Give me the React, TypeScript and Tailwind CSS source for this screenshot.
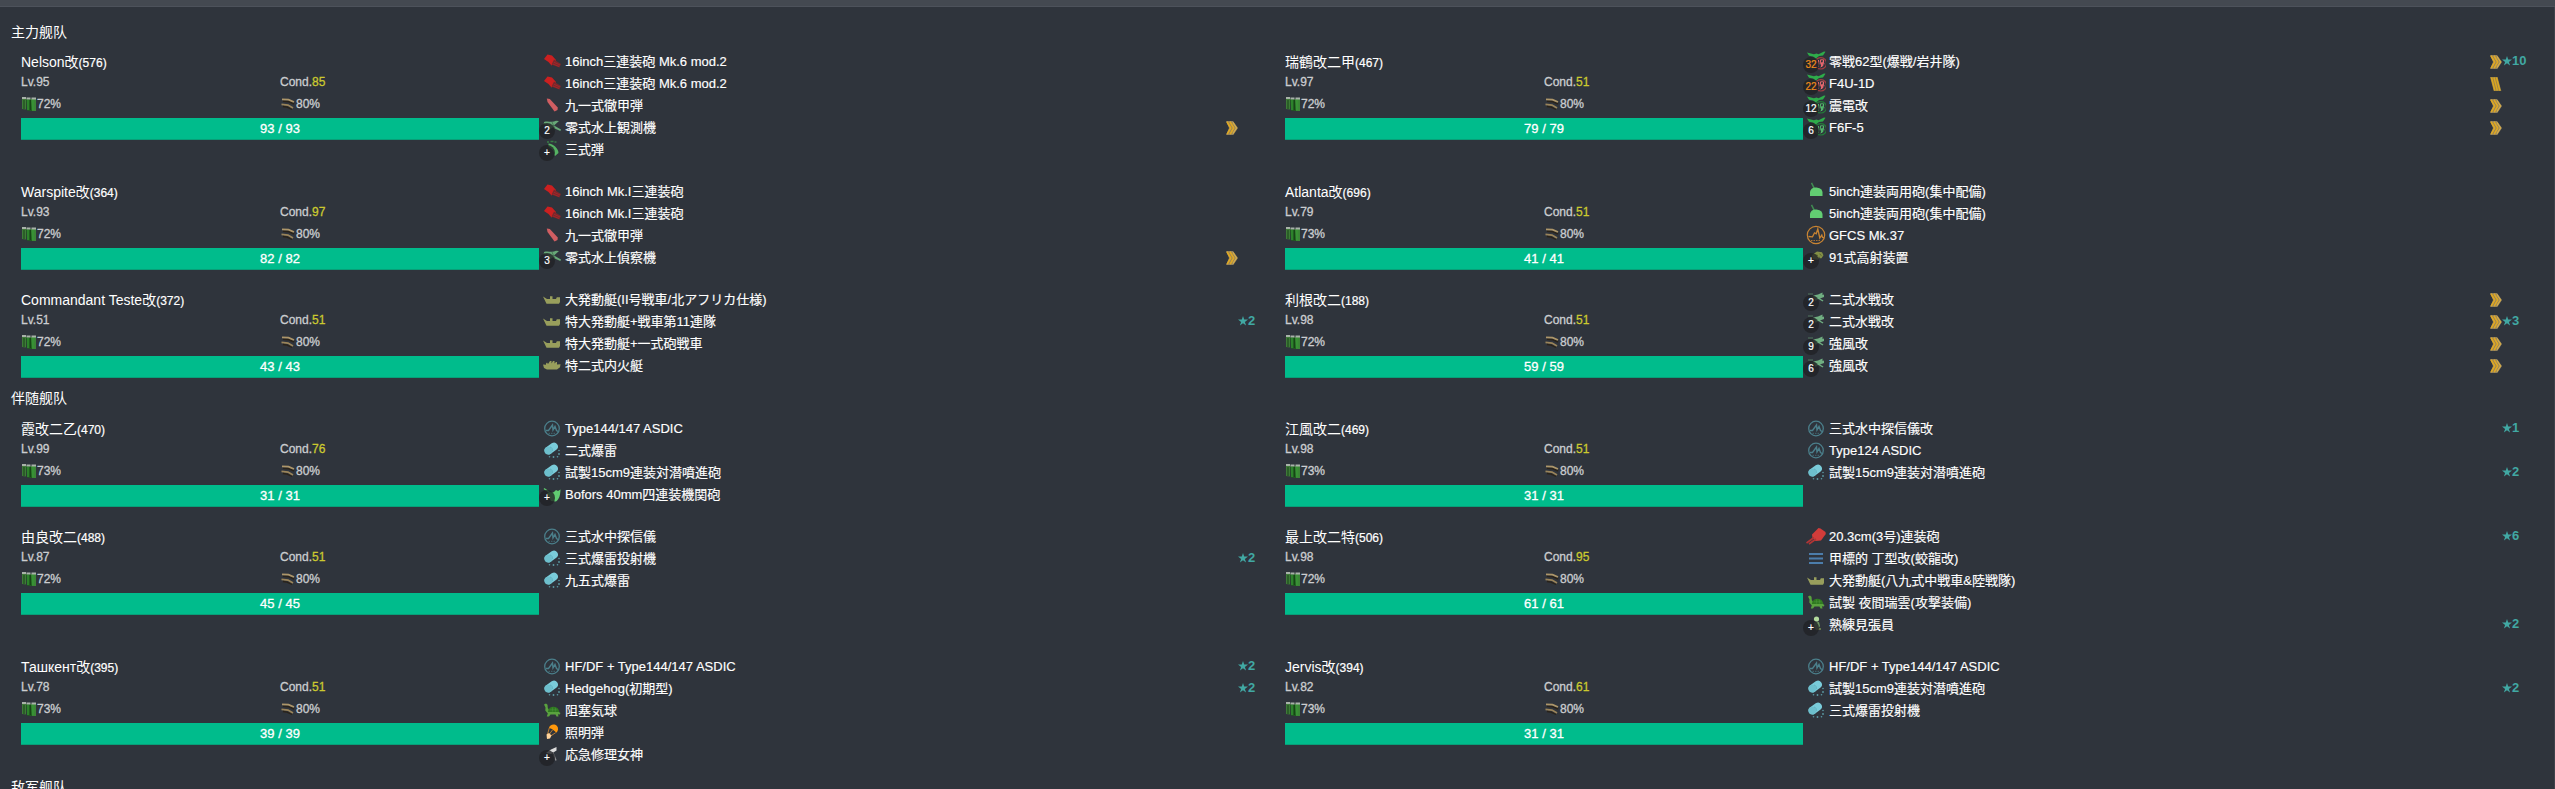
import React from "react";

type IconName =
  | "gun" | "redgun" | "ap" | "seaplane" | "aa" | "craft" | "tank" | "sonar" | "depth"
  | "aagun" | "turtle" | "flare" | "goddess" | "bomber" | "fighter" | "ha" | "radar"
  | "director" | "wfighter" | "midget" | "lookout";

type Item = {
  n: string;
  i: IconName;
  b?: string;
  over?: boolean;
  alv?: "chev" | "bars";
  star?: number;
};

type Ship = { name: string; id: number; lv: number; cond: number; fuel: number; hp: number; items: Item[] };

function Icon({ name }: { name: IconName }) {
  switch (name) {
    case "gun":
      return (
        <g>
          <path d="M2 8l3.500-4.500 4.500 1 4 4.500-1 3.500-3.500 2-3-3.500z" fill="#cb2020" />
          <path d="M12 8.500l7 4.500-1.500 3.500-8-3z" fill="#7a282c" />
          <path d="M11 13l6 2.500M12 11.300l6 2.700" stroke="#b32426" strokeWidth=".7" />
        </g>
      );
    case "redgun":
      return (
        <g>
          <path d="M6 8.500L12.500 2l2 .5 5 3.500.3 2-4.800 6.500-5.500.5-3-3z" fill="#d23c3a" />
          <path d="M.5 17l7.500-5.500M3 18l7-5" stroke="#b03535" strokeWidth="1.600" />
        </g>
      );
    case "ap":
      return <path d="M4.800 3.500l3 .5 8 8.500-.3 2.500-3 1.500-7-9.500z" fill="#d05e62" />;
    case "seaplane":
      return (
        <g>
          <path d="M2 5c4-1.500 8 1 12-1.200l3 .2-5 4.500 7 4-.6 1.500-8-3.500-4 3-1-1.500 2.500-2.500L2 6.500z" fill="#68a878" />
          <path d="M1 7l7 1M10 5l3 7" stroke="#497a56" />
        </g>
      );
    case "aa":
      return (
        <g>
          <path d="M6.500 4.500c5 .5 10 5 10 9.500L13 17l-1-1c.5-4-2-6.500-5.500-8z" fill="#55b263" />
          <path d="M5 3h2M8.500 2.500h3M12.500 3h2" stroke="#397c46" strokeWidth="1.500" />
        </g>
      );
    case "craft":
      return (
        <path d="M1 7.500l4 2.500h3V7.300h2.500V10h3.500l.8-1.800H18V13l-1 1.800H4.500z" fill="#989e5c" />
      );
    case "tank":
      return (
        <path d="M1 9.500l3 .2V8.500l1-1 1 1.500L8 6h1.500v2.500l1.500-2.500h1.500v2.500l1.500-1.500h1v2.500l3.500-.2-.5 2.900-3 2.300H5l-3-1.500z" fill="#989e5c" />
      );
    case "sonar":
      return (
        <g fill="none" stroke="#4b7f8b" strokeWidth="1.300">
          <circle cx="10" cy="10.500" r="7.300" />
          <path d="M4 12.500h2.500L10.500 7l.5 5 2-3.500 1.500 4 1.500 1" strokeWidth="1.400" />
          <path d="M6.500 15.300h7" strokeDasharray="1.500 1" strokeWidth=".7" />
        </g>
      );
    case "depth":
      return (
        <g>
          <path d="M6.500 10.500L12 6.500" stroke="#7accda" strokeWidth="7.800" strokeLinecap="round" />
          <circle cx="6.300" cy="10.600" r="3.900" fill="#6dbfcd" />
          <path d="M8 6.900c1.800.4 2.800 2 2.500 4" stroke="#5faebc" fill="none" strokeWidth=".8" />
          <g fill="#5b9aa5">
            <circle cx="17" cy="10.500" r=".8" /><circle cx="17" cy="14" r=".9" />
            <circle cx="7.500" cy="16.800" r=".8" /><circle cx="11.500" cy="17" r=".9" /><circle cx="15.500" cy="16.800" r=".8" />
          </g>
        </g>
      );
    case "aagun":
      return (
        <g>
          <path d="M2 4.500l7 5" stroke="#5dc46b" strokeWidth="1.500" />
          <path d="M5 9l7-1 2-2 2 1 2.500-1.500c-.3 5.500-1 9.500-4.500 12L9 17z" fill="#61cb71" />
        </g>
      );
    case "turtle":
      return (
        <g>
          <path d="M2 4.500l2-1 1.500 1.200.3 3.300L8 11.500l8.500.3 2 1.200-.8 1.500-1.700-.3.500 2.300h-2l-1-2H8.500l-1.500 2H4.800l1-3-2.500-3L3.500 7.500z" fill="#5aa23f" />
          <path d="M5.800 12c.5-3.800 3-5.500 6-5.300 3.200.2 5.300 2.300 5.500 5.300z" fill="#2f7a20" />
          <path d="M8 9.800h7.500M10.500 7.500v4.200M13.500 7.700v4" stroke="#4c953c" strokeWidth=".5" />
        </g>
      );
    case "flare":
      return (
        <g>
          <path d="M7 6C7.500 3 12 1 15 4c1.700 2 1.300 4.800-.7 6.800C12.500 8.500 10.500 7 7 6z" fill="#ff980c" />
          <path d="M7.300 6l-2 7M13.700 10.700L7 15M10.500 8L6 14" stroke="#c98434" strokeWidth=".9" />
          <path d="M4.500 12.500l2.500-1.500 2.500 2.500-1.500 3-3 .5z" fill="#ffd29a" />
        </g>
      );
    case "goddess":
      return (
        <g>
          <path d="M4 9l5-3.500 5.500-2.500v3.500L9 10z" fill="#ddd" />
          <path d="M10.500 8l3.500 8.500" stroke="#8d8d90" strokeWidth="1.500" />
        </g>
      );
    case "bomber":
    case "fighter": {
      const red = name === "bomber";
      return (
        <g>
          <path d="M1 1.500l7 1.700L10.500 2.500l2 .7L18 .5l1.500.3-2.500 3.700-4 .5-3 2.500-3-2-4-.7z" fill="#2eac4a" />
          <path d="M1 8l17-1" stroke="#285f39" strokeWidth="1" />
          <circle cx="14.800" cy="12.300" r="5.700" fill="#2f343c" stroke={red ? "#a43d43" : "#237e39"} strokeWidth="1.200" />
          <path
            d="M12.500 9v7M14.500 8.800h3v3h-3zM13.500 12.800h5M15.500 12v4M17.500 14l-3 2M11.500 11h2M17.500 9.500l-1.500 6"
            fill="none" stroke={red ? "#f36b72" : "#55bd6d"} strokeWidth=".9"
          />
        </g>
      );
    }
    case "ha":
      return (
        <g>
          <path d="M5.500 1.800l3 6" stroke="#3f8a51" strokeWidth="1.500" />
          <path d="M4 15V11c.3-3 3-5 6.500-4.500l3 .7 2 1.300 1 2.500v4z" fill="#62cd72" />
        </g>
      );
    case "radar":
      return (
        <g fill="none" stroke="#c98432" strokeWidth="1.200">
          <circle cx="10" cy="10" r="8.700" />
          <path d="M2.500 11.500l4 .3 2-4 1.700 1L11.800 4l2 9 2-3 .7 2.500 1.500.2" strokeWidth="1.300" />
          <path d="M5 15.500h10" strokeDasharray="1.500 1" strokeWidth=".8" />
        </g>
      );
    case "director":
      return (
        <g>
          <path d="M6 8l5-3.500 5 .8 1.500 3-2 3h-1.800l-.7-2-1 3.500L7 12z" fill="#838f46" />
          <path d="M9 7.500l3 1M13.500 7l2 1.500" stroke="#59652d" />
        </g>
      );
    case "wfighter":
      return (
        <g>
          <path d="M7 6.500l5-1 4.500-2V6l1.500-.5v2.500l-4 1.500 3.500 2-1 1-4-2.500-3 2-1-2.500z" fill="#70ae81" />
          <path d="M2 5h5M5 8l5 1" stroke="#52775e" strokeWidth="1" />
        </g>
      );
    case "midget":
      return <path d="M3 6h14M3 10.500h14M3 15h14" stroke="#4c7dab" strokeWidth="1.800" />;
    case "lookout":
      return (
        <g>
          <circle cx="10.500" cy="5" r="2.600" fill="#b3dc9e" />
          <path d="M8 8.500l5-.5 1 4-3 4.500-2.500-2z" fill="#6f9863" />
          <path d="M11 15h4" stroke="#768c52" strokeWidth="1.500" />
        </g>
      );
  }
}

const S = (n: string, i: IconName, x: Partial<Item> = {}): Item => ({ n, i, ...x });

const mainFleet: [Ship, Ship][] = [
  [
    { name: "Nelson改", id: 576, lv: 95, cond: 85, fuel: 72, hp: 93, items: [
      S("16inch三連装砲 Mk.6 mod.2", "gun"),
      S("16inch三連装砲 Mk.6 mod.2", "gun"),
      S("九一式徹甲弾", "ap"),
      S("零式水上観測機", "seaplane", { b: "2", alv: "chev" }),
      S("三式弾", "aa", { b: "+" }),
    ] },
    { name: "瑞鶴改二甲", id: 467, lv: 97, cond: 51, fuel: 72, hp: 79, items: [
      S("零戦62型(爆戦/岩井隊)", "bomber", { b: "32", over: true, alv: "chev", star: 10 }),
      S("F4U-1D", "bomber", { b: "22", over: true, alv: "bars" }),
      S("震電改", "fighter", { b: "12", alv: "chev" }),
      S("F6F-5", "fighter", { b: "6", alv: "chev" }),
    ] },
  ],
  [
    { name: "Warspite改", id: 364, lv: 93, cond: 97, fuel: 72, hp: 82, items: [
      S("16inch Mk.I三連装砲", "gun"),
      S("16inch Mk.I三連装砲", "gun"),
      S("九一式徹甲弾", "ap"),
      S("零式水上偵察機", "seaplane", { b: "3", alv: "chev" }),
    ] },
    { name: "Atlanta改", id: 696, lv: 79, cond: 51, fuel: 73, hp: 41, items: [
      S("5inch連装両用砲(集中配備)", "ha"),
      S("5inch連装両用砲(集中配備)", "ha"),
      S("GFCS Mk.37", "radar"),
      S("91式高射装置", "director", { b: "+" }),
    ] },
  ],
  [
    { name: "Commandant Teste改", id: 372, lv: 51, cond: 51, fuel: 72, hp: 43, items: [
      S("大発動艇(II号戦車/北アフリカ仕様)", "craft"),
      S("特大発動艇+戦車第11連隊", "craft", { star: 2 }),
      S("特大発動艇+一式砲戦車", "craft"),
      S("特二式内火艇", "tank"),
    ] },
    { name: "利根改二", id: 188, lv: 98, cond: 51, fuel: 72, hp: 59, items: [
      S("二式水戦改", "wfighter", { b: "2", alv: "chev" }),
      S("二式水戦改", "wfighter", { b: "2", alv: "chev", star: 3 }),
      S("強風改", "wfighter", { b: "9", alv: "chev" }),
      S("強風改", "wfighter", { b: "6", alv: "chev" }),
    ] },
  ],
];

const escortFleet: [Ship, Ship][] = [
  [
    { name: "霞改二乙", id: 470, lv: 99, cond: 76, fuel: 73, hp: 31, items: [
      S("Type144/147 ASDIC", "sonar"),
      S("二式爆雷", "depth"),
      S("試製15cm9連装対潜噴進砲", "depth"),
      S("Bofors 40mm四連装機関砲", "aagun", { b: "+" }),
    ] },
    { name: "江風改二", id: 469, lv: 98, cond: 51, fuel: 73, hp: 31, items: [
      S("三式水中探信儀改", "sonar", { star: 1 }),
      S("Type124 ASDIC", "sonar"),
      S("試製15cm9連装対潜噴進砲", "depth", { star: 2 }),
    ] },
  ],
  [
    { name: "由良改二", id: 488, lv: 87, cond: 51, fuel: 72, hp: 45, items: [
      S("三式水中探信儀", "sonar"),
      S("三式爆雷投射機", "depth", { star: 2 }),
      S("九五式爆雷", "depth"),
    ] },
    { name: "最上改二特", id: 506, lv: 98, cond: 95, fuel: 72, hp: 61, items: [
      S("20.3cm(3号)連装砲", "redgun", { star: 6 }),
      S("甲標的 丁型改(蛟龍改)", "midget"),
      S("大発動艇(八九式中戦車&陸戦隊)", "craft"),
      S("試製 夜間瑞雲(攻撃装備)", "turtle"),
      S("熟練見張員", "lookout", { b: "+", star: 2 }),
    ] },
  ],
  [
    { name: "Ташкент改", id: 395, lv: 78, cond: 51, fuel: 73, hp: 39, items: [
      S("HF/DF + Type144/147 ASDIC", "sonar", { star: 2 }),
      S("Hedgehog(初期型)", "depth", { star: 2 }),
      S("阻塞気球", "turtle"),
      S("照明弾", "flare"),
      S("応急修理女神", "goddess", { b: "+" }),
    ] },
    { name: "Jervis改", id: 394, lv: 82, cond: 61, fuel: 73, hp: 31, items: [
      S("HF/DF + Type144/147 ASDIC", "sonar"),
      S("試製15cm9連装対潜噴進砲", "depth", { star: 2 }),
      S("三式爆雷投射機", "depth"),
    ] },
  ],
];

function FuelIcon() {
  return (
    <svg className="h-4 w-4 shrink-0" viewBox="0 0 16 16">
      <path d="M1 2h4v11.500l-4-.5z" fill="#3f7a39" />
      <path d="M5 3h6v12l-5-.5z" fill="#1f5f1f" />
      <path d="M10 3h5v12h-4z" fill="#3b8636" />
      <path d="M7 4v10M12 4v10" stroke="#389a35" strokeWidth="1.200" />
      <path d="M3 4v9M9.500 4v10" stroke="#164516" />
      <path d="M1 2h4M5.500 2.500h4M10.500 2.500h4.500" stroke="#a9b3a9" strokeWidth="2" />
    </svg>
  );
}

function AmmoIcon() {
  return (
    <svg className="h-4 w-4 shrink-0" viewBox="0 0 16 16">
      <path d="M3 5.300l6 .4 5 2.300" stroke="#2a2319" strokeWidth="1.600" fill="none" />
      <path d="M2 3.300l6.500.3L14 6" stroke="#ad966a" strokeWidth="1.800" fill="none" />
      <path d="M1.500 8.300L8 9l5 3" stroke="#9a845a" strokeWidth="1.800" fill="none" />
      <path d="M3 10.500l4 .7 5 2.300" stroke="#2a2319" strokeWidth="1.300" fill="none" />
    </svg>
  );
}

function Proficiency({ kind }: { kind: "chev" | "bars" }) {
  return (
    <svg className="h-4 w-3" viewBox="0 0 12 16">
      {kind === "chev" ? (
        <g>
          <path d="M0 1h7l5 7-4.700 7H0l3-7z" fill="#94825a" />
          <path d="M1 1.800L4.700 8l-3.500 6.200M4 1.800L7.700 8l-3.500 6.200" fill="none" stroke="#dfa824" strokeWidth="1.700" />
          <path d="M6.900 2.300L10.500 8l-3.600 5.700" fill="none" stroke="#d8ad48" strokeWidth="1.300" />
        </g>
      ) : (
        <g>
          <path d="M0 1h7.500L11.300 15H3.800z" fill="#9d8443" />
          <path d="M1.500 1.500l3.300 13M4 1.500l3.300 13M6.500 1.500l3.300 13" stroke="#dba722" strokeWidth="1.500" />
        </g>
      )}
    </svg>
  );
}

function ItemRow({ item }: { item: Item }) {
  return (
    <div className="flex h-[22px] items-center text-[13px] leading-[22px] text-white">
      <div className="relative h-[22px] w-[26px] shrink-0">
        <svg className="ml-[3px] mt-px h-5 w-5" viewBox="0 0 20 20" fill="none">
          <Icon name={item.i} />
        </svg>
        {item.b && (
          <span
            className={
              "absolute left-0 top-[7px] flex h-4 w-4 items-center justify-center rounded-full bg-[#202225]/80 text-[10px] leading-none [-webkit-text-stroke:0.2px_currentColor] " +
              (item.over ? "text-[#ee8c1c]" : "text-white")
            }
          >
            {item.b}
          </span>
        )}
      </div>
      <span className="grow whitespace-nowrap pt-px [-webkit-text-stroke:0.15px_currentColor]">{item.n}</span>
      <span className="h-4 w-3 shrink-0 pt-px">{item.alv && <Proficiency kind={item.alv} />}</span>
      <span className="flex w-[37px] shrink-0 items-center font-bold text-[#41a8a3]">
        {item.star && (
          <>
            <svg className="h-[10px] w-[10px]" viewBox="0 0 10 10">
              <path d="M5 0l1.200 3.600H10L6.900 5.900 8.100 9.600 5 7.300 1.900 9.600l1.200-3.700L0 3.600h3.800z" fill="#41a8a3" />
            </svg>
            {item.star}
          </>
        )}
      </span>
    </div>
  );
}

function ShipCell({ ship }: { ship: Ship }) {
  return (
    <div className="flex w-[1264px] shrink-0 py-[10px] pl-[10px]">
      <div className="h-[88px] w-[518px] shrink-0">
        <div className="flex h-[22px] items-baseline whitespace-nowrap text-[14px] leading-6 text-white">
          {ship.name}
          <span className="text-[12px] [-webkit-text-stroke:0.2px_currentColor]">({ship.id})</span>
        </div>
        <div className="flex h-[22px] text-[12px] leading-[20px] text-[#cbcdd0] [-webkit-text-stroke:0.3px_currentColor]">
          <div className="w-1/2">Lv.{ship.lv}</div>
          <div className="w-1/2">
            Cond.<span className="text-[#cbc92f]">{ship.cond}</span>
          </div>
        </div>
        <div className="flex h-6 text-[12px] leading-[20px] text-[#cbcdd0] [-webkit-text-stroke:0.3px_currentColor]">
          <div className="flex h-5 w-1/2 items-center"><FuelIcon />{ship.fuel}%</div>
          <div className="flex h-5 w-1/2 items-center"><AmmoIcon />80%</div>
        </div>
        <div className="h-[22px] border-b border-[#089f78] bg-[#00bc8c] text-center text-[13px] leading-[21px] text-white [-webkit-text-stroke:0.3px_currentColor]">
          {ship.hp} / {ship.hp}
        </div>
      </div>
      <div className="grow">
        {ship.items.map((item, k) => (
          <ItemRow key={k} item={item} />
        ))}
      </div>
    </div>
  );
}

function Fleet({ title, rows }: { title: string; rows: [Ship, Ship][] }) {
  return (
    <section className="group">
      <h2 className="h-[21px] whitespace-nowrap text-[14px] leading-[24px] text-white group-first:leading-[26px]">{title}</h2>
      {rows.map((row, k) => (
        <div key={k} className="flex">
          <ShipCell ship={row[0]} />
          <ShipCell ship={row[1]} />
        </div>
      ))}
    </section>
  );
}

export default function App() {
  return (
    <div className="h-[789px] w-full overflow-hidden bg-[#2f343c] font-['Liberation_Sans','Noto_Sans_CJK_JP','Noto_Sans_CJK_SC',sans-serif]">
      <div className="h-[7px] border-b border-[#4d525b] bg-[#444951]" />
      <main className="h-[782px] overflow-hidden border-r border-[#3f434b] pl-[11px] pt-3">
        <Fleet title="主力舰队" rows={mainFleet} />
        <Fleet title="伴随舰队" rows={escortFleet} />
        <Fleet title="敌军舰队" rows={[]} />
      </main>
    </div>
  );
}
